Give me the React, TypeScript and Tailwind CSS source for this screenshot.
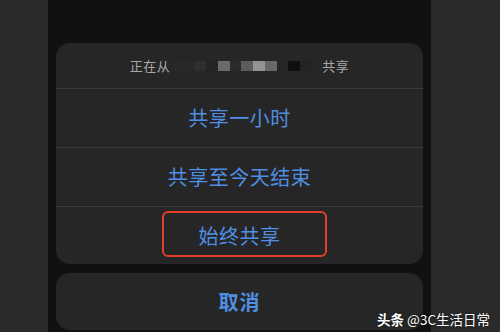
import React from 'react';

const blocks = [
  { w: 22, c: '#282828' },
  { w: 11, c: '#2e2e2e' },
  { w: 12, c: '#242424' },
  { w: 12, c: '#6b6b6b' },
  { w: 11, c: '#2b2b2b' },
  { w: 12, c: '#5c5c5c' },
  { w: 12, c: '#939393' },
  { w: 12, c: '#686868' },
  { w: 11, c: '#262626' },
  { w: 12, c: '#0f0f0f' },
  { w: 12, c: '#232323' },
];

const Option: React.FC<{ label: string; children?: React.ReactNode; h: string }> = ({ label, children, h }) => (
  <div className={`relative flex items-center justify-center ${h}`}>
    <span className="text-[20px] text-[#4f8fe3] tracking-[0.5px]">{label}</span>
    {children}
  </div>
);

export default function App() {
  return (
    <div
      className="relative flex w-[500px] h-[332px] overflow-hidden bg-[#2a2a2a]"
      style={{ fontFamily: '"Noto Sans CJK SC", "Noto Sans", sans-serif' }}
    >
      <div className="w-[48px] shrink-0" />
      <div className="w-[383px] shrink-0 bg-[#111111] px-2 pt-[43px] flex flex-col">
        <div className="rounded-[14px] bg-[#262626] overflow-hidden">
          <div className="h-[45px] flex items-center justify-center text-[13px] text-[#a8a8a8] tracking-[0.5px]">
            <span>正在从</span>
            <div className="flex items-center h-[10px] ml-[3px] mr-[10px]">
              {blocks.map((b, i) => (
                <div key={i} className="h-[10px]" style={{ width: b.w, backgroundColor: b.c }} />
              ))}
            </div>
            <span>共享</span>
          </div>
          <div className="h-px bg-[#3b3b3b]" />
          <Option label="共享一小时" h="h-[58px]" />
          <div className="h-px bg-[#3b3b3b]" />
          <Option label="共享至今天结束" h="h-[58px]" />
          <div className="h-px bg-[#3b3b3b]" />
          <Option label="始终共享" h="h-[57px]">
            <div className="absolute left-[106px] top-[4px] w-[165px] h-[46px] rounded-[6px] border-2 border-[#e23f2b]" />
          </Option>
        </div>
        <div className="mt-[9px] h-[57px] rounded-[14px] bg-[#262626] flex items-center justify-center">
          <span className="text-[20px] font-semibold text-[#4f8fe3] tracking-[1px]">取消</span>
        </div>
      </div>
      <div className="flex-1" />
      <div className="absolute right-[10px] bottom-[6px] text-[13.5px] text-white leading-none [text-shadow:0_0_2px_rgba(0,0,0,0.6)]">
        <span className="font-bold">头条</span> @3C生活日常
      </div>
    </div>
  );
}
